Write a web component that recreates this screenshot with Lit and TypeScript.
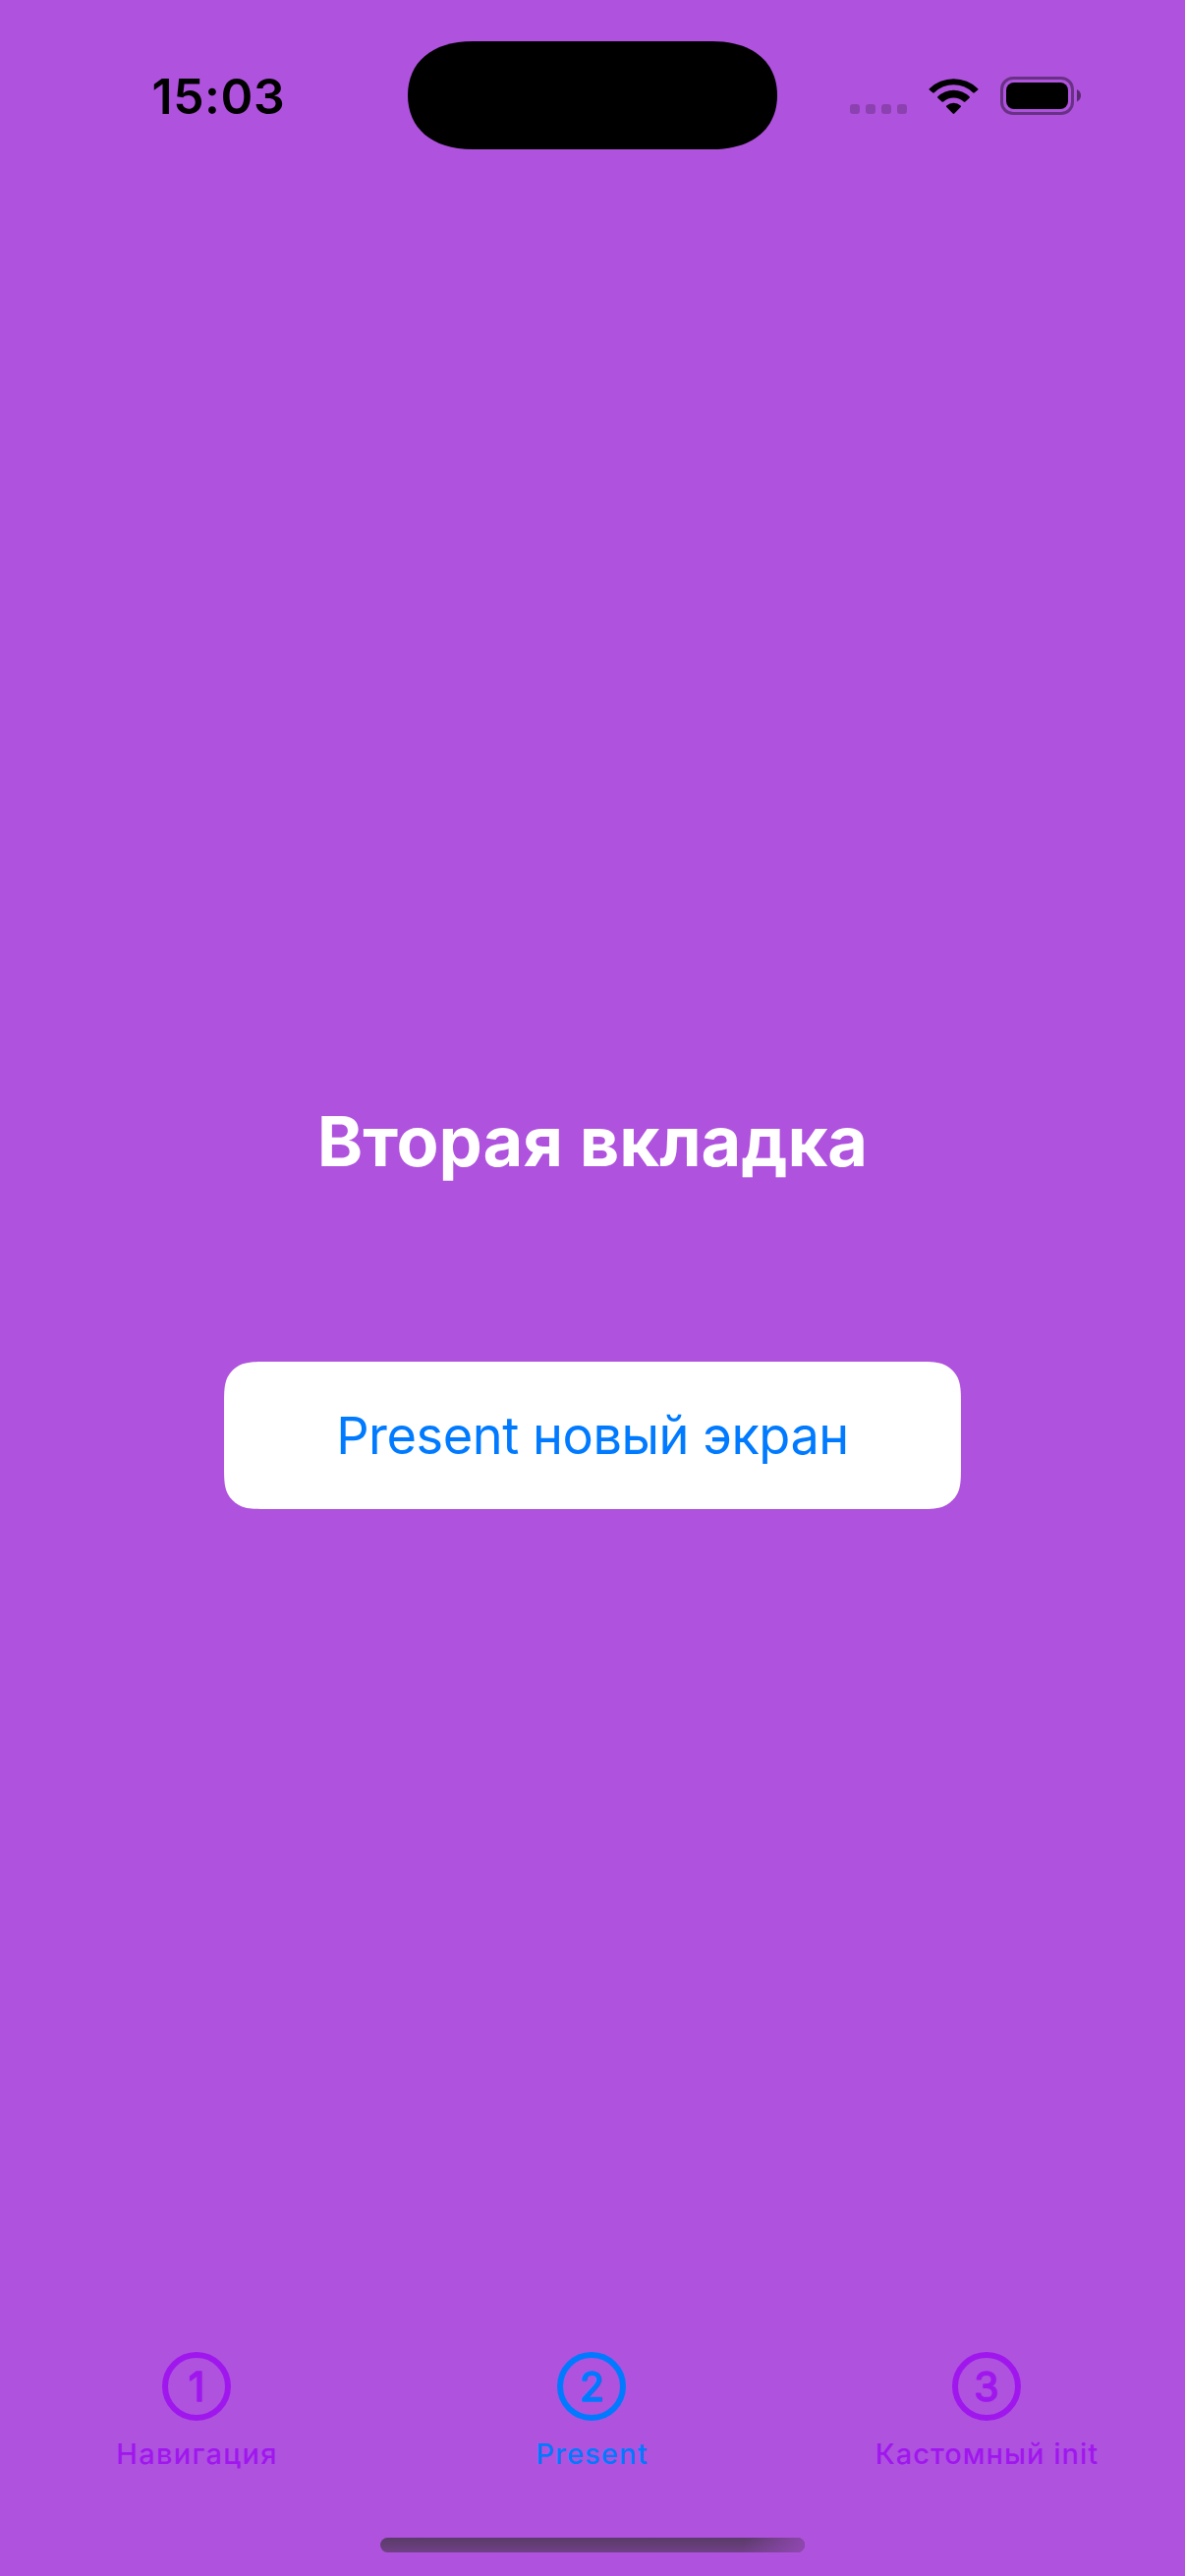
import { LitElement, html, css, svg } from "lit";
import { customElement, property, state } from "lit/decorators.js";

interface TabItem {
  label: string;
  digit: string;
  kind: string;
}

const TABS: TabItem[] = [
  { label: "Навигация", digit: "1", kind: "nav" },
  { label: "Present", digit: "2", kind: "present" },
  { label: "Кастомный init", digit: "3", kind: "custom" },
];

@customElement("status-bar")
class StatusBar extends LitElement {
  static styles = css`
    :host {
      display: grid;
      grid-template-columns: 415px 376px 415px;
      align-items: center;
      height: 110px;
      padding-top: 42px;
      color: #000;
    }
    .time {
      padding-left: 154.5px;
      font-size: 49.8px;
      line-height: 60px;
      padding-top: 2px;
      font-weight: 600;
      letter-spacing: 0.6px;
      white-space: nowrap;
    }
    svg {
      display: block;
    }
    .icons {
      display: flex;
      align-items: center;
      padding-left: 74px;
    }
    .wifi {
      margin-left: 22px;
    }
    .battery {
      margin-left: 22px;
    }
  `;

  render() {
    return html`
      <div class="time">15:03</div>
      <svg width="376" height="110" viewBox="0 0 376 110">
        <path
          d="M0 55C0 22 24 0 66 0H310C352 0 376 22 376 55S352 110 310 110H66C24 110 0 88 0 55Z"
        />
      </svg>
      <div class="icons">
        <svg width="58" height="40" viewBox="865 77 58 40" fill-opacity="0.2">
          ${[865, 881, 897, 913].map(
            (x) => svg`<rect x=${x} y="106" width="10" height="10" rx="3" />`
          )}
        </svg>
        <svg class="wifi" width="51" height="40" viewBox="945 77 51 40">
          <path
            d="M945.8 90.2A35.5 35.5 0 0 1 995.2 90.2Q995.9 90.9 995.2 91.6L991.8 94.3Q991 95 990.2 94.3A28 28 0 0 0 950.8 94.3Q950 95 949.2 94.3L945.8 91.6Q945.1 90.9 945.8 90.2Z"
          />
          <path
            d="M954.4 98.3A23 23 0 0 1 986.6 98.3Q987.3 99 986.6 99.7L982.4 103.5Q981.6 104.2 980.8 103.5A15.6 15.6 0 0 0 960.2 103.5Q959.4 104.2 958.6 103.5L954.4 99.7Q953.7 99 954.4 98.3Z"
          />
          <path
            d="M963.3 107.4A11.3 11.3 0 0 1 977.7 107.4Q978.5 108.2 977.7 109L971.3 115.5Q970.5 116.3 969.7 115.5L963.3 109Q962.5 108.2 963.3 107.4Z"
          />
        </svg>
        <svg class="battery" width="83" height="40" viewBox="1018 77 83 40">
          <rect
            x="1019.5"
            y="79.5"
            width="72"
            height="36"
            rx="11.5"
            fill="none"
            stroke="#000"
            stroke-width="3"
            stroke-opacity="0.4"
          />
          <rect x="1024" y="84" width="63" height="27" rx="8" />
          <path d="M1096 91Q1100 93 1100 97.2T1096 103.4Z" fill-opacity="0.5" />
        </svg>
      </div>
    `;
  }
}

@customElement("tab-bar")
class TabBar extends LitElement {
  @property({ type: Number }) selected = 1;

  static styles = css`
    :host {
      display: grid;
      grid-template-columns: repeat(3, 402px);
    }
    .tab {
      display: flex;
      flex-direction: column;
      align-items: center;
      padding-right: 2px;
      gap: 16px;
      border: 0;
      background: none;
      color: #a017ee;
      fill: currentColor;
    }
    .active {
      color: #007aff;
    }
    svg {
      display: block;
    }
    .digit {
      font: 400 41px Inter, sans-serif;
      text-anchor: middle;
      stroke: currentColor;
      stroke-width: 1.6;
      stroke-linejoin: round;
    }
    .label {
      font-size: 29px;
      line-height: 36px;
      font-weight: 500;
      margin-right: -1px;
      white-space: nowrap;
    }
    .nav {
      letter-spacing: 1.3px;
    }
    .present {
      letter-spacing: 1.15px;
    }
    .custom {
      letter-spacing: 1px;
    }
  `;

  render() {
    return TABS.map(
      (tab, i) => html`
        <div class="tab ${i === this.selected ? "active" : ""}">
          <svg width="70" height="70" viewBox="0 0 70 70">
            <circle cx="35" cy="35" r="32" fill="none" stroke="currentColor" stroke-width="6" />
            <text class="digit" x="35" y="50">${tab.digit}</text>
          </svg>
          <span class="label ${tab.kind}">${tab.label}</span>
        </div>
      `
    );
  }
}

@customElement("app-root")
class AppRoot extends LitElement {
  @state() private tab = 1;

  static styles = css`
    :host {
      display: flex;
      flex-direction: column;
      width: 1206px;
      height: 2622px;
      background: #af52de;
      font-family: Inter, "Liberation Sans", sans-serif;
      overflow: hidden;
    }
    .content {
      flex: 1;
      display: flex;
      flex-direction: column;
      align-items: center;
      padding-top: 960px;
    }
    .title {
      margin: 0;
      font-size: 70.3px;
      line-height: 100px;
      font-weight: 700;
      color: #fff;
      white-space: nowrap;
    }
    .action {
      display: grid;
      place-items: center;
      width: 750px;
      height: 150px;
      margin-top: 174px;
      color: #007aff;
      font-size: 52.3px;
      letter-spacing: -0.45px;
      white-space: nowrap;
    }
    .plate,
    .caption {
      grid-area: 1 / 1;
    }
    .home {
      display: block;
      margin: 67px 0 24px 387px;
    }
  `;

  render() {
    return html`
      <status-bar></status-bar>
      <main class="content">
        <h1 class="title">Вторая вкладка</h1>
        <div class="action" role="button">
          <svg class="plate" width="750" height="150" viewBox="0 0 750 150">
            <path
              fill="#fff"
              d="M45.9 0H704.1C717.3 0 724 0 731.1 2.25C738.8 5.1 744.9 11.2 747.75 18.9C750 26 750 32.7 750 45.9V104.1C750 117.3 750 124 747.75 131.1C744.9 138.8 738.8 144.9 731.1 147.75C724 150 717.3 150 704.1 150H45.9C32.7 150 26 150 18.9 147.75C11.2 144.9 5.1 138.8 2.25 131.1C0 124 0 117.3 0 104.1V45.9C0 32.7 0 26 2.25 18.9C5.1 11.2 11.2 5.1 18.9 2.25C26 0 32.7 0 45.9 0Z"
            />
          </svg>
          <span class="caption">Present новый экран</span>
        </div>
      </main>
      <tab-bar .selected=${this.tab}></tab-bar>
      <svg class="home" width="432" height="15" viewBox="0 0 432 15">
        <defs>
          <linearGradient id="shade" x1="0" y1="0" x2="0" y2="1">
            <stop offset="0" stop-color="#593b68" />
            <stop offset="1" stop-color="#704087" />
          </linearGradient>
          <linearGradient id="glow" gradientUnits="userSpaceOnUse" x1="372" y1="0" x2="432" y2="18">
            <stop offset="0" stop-color="#9148b2" stop-opacity="0" />
            <stop offset="1" stop-color="#9148b2" />
          </linearGradient>
        </defs>
        <rect width="432" height="15" rx="7.5" fill="url(#shade)" />
        <rect width="432" height="15" rx="7.5" fill="url(#glow)" />
      </svg>
    `;
  }
}
